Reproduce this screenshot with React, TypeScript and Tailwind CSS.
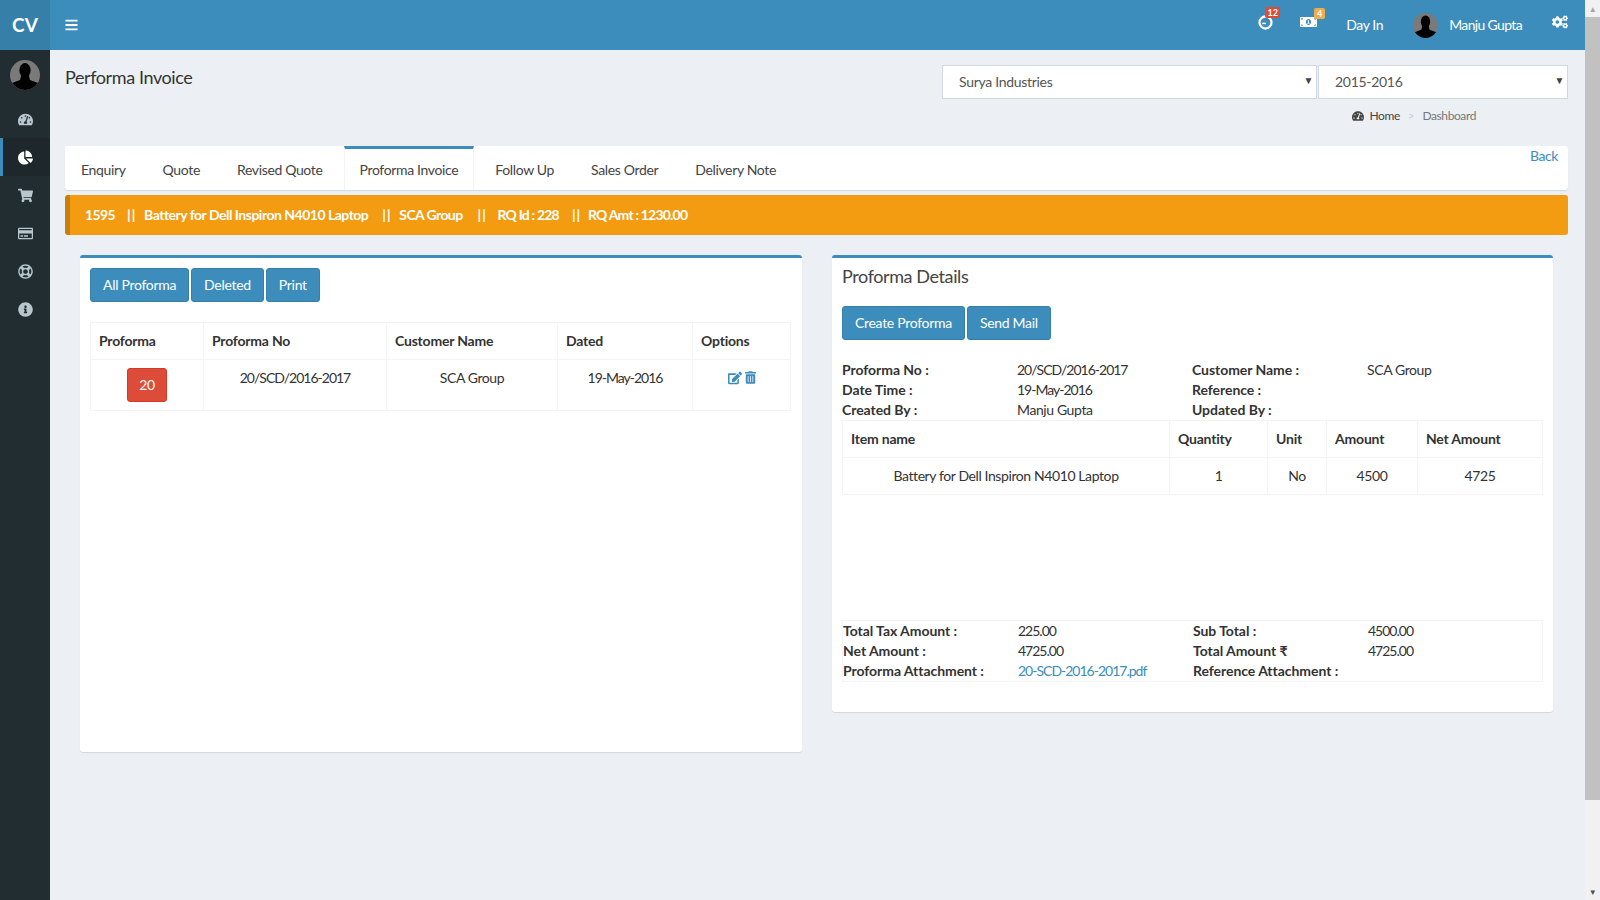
import { FaBars, FaCogs, FaChartPie, FaEdit, FaInfoCircle, FaMoneyBillAlt, FaRegCreditCard, FaRegLifeRing, FaShoppingCart, FaTachometerAlt, FaTrashAlt } from 'react-icons/fa';

const navIcons = [FaTachometerAlt, FaChartPie, FaShoppingCart, FaRegCreditCard, FaRegLifeRing, FaInfoCircle];
const tabs = ['Enquiry', 'Quote', 'Revised Quote', 'Proforma Invoice', 'Follow Up', 'Sales Order', 'Delivery Note'];
const alertBits = [
  { text: 'Battery for Dell Inspiron N4010 Laptop', sep: 'ml-[12px] mr-[11px]', cls: 'tracking-[-0.5px]' },
  { text: 'SCA Group', sep: 'ml-[14px] mr-[11px]', cls: 'tracking-[-0.6px]' },
  { text: 'RQ Id : 228', sep: 'ml-[15px] mr-[14px]', cls: 'tracking-[-0.8px]' },
  { text: 'RQ Amt : 1230.00', sep: 'ml-[13px] mr-[10px]', cls: 'tracking-[-0.8px]' },
];

function Avatar({ size }: { size: string }) {
  return (
    <svg viewBox="0 0 30 30" className={size}>
      <defs>
        <clipPath id="avatar-clip">
          <circle cx="15" cy="15" r="15" />
        </clipPath>
      </defs>
      <circle cx="15" cy="15" r="15" fill="#7a7a7a" />
      <g clipPath="url(#avatar-clip)" fill="#000">
        <ellipse cx="15" cy="10.5" rx="5.6" ry="7.5" />
        <path d="M11 16h8l1 4 8 3v7H2v-7l8-3z" />
      </g>
    </svg>
  );
}

function Btn({ children }: { children: string }) {
  return (
    <button className="h-[34px] rounded-[3px] border border-[#367fa9] bg-[#3c8dbc] px-3 text-sm tracking-[-0.3px] text-white">
      {children}
    </button>
  );
}

function Value({ text }: { text: string }) {
  return <span className={/\d/.test(text) ? 'tracking-[-1px]' : ''}>{text}</span>;
}

function Info({ rows }: { rows: string[][] }) {
  return (
    <>
      {rows.map((row) => (
        <div key={row[0]} className="grid h-5 grid-cols-[175px_175px_175px_175px] items-center text-sm leading-5">
          <b className="font-bold tracking-[-0.05px] text-[#333]">{row[0]}</b>
          <Value text={row[1]} />
          <b className="font-bold tracking-[-0.05px] text-[#333]">{row[2]}</b>
          <Value text={row[3]} />
        </div>
      ))}
    </>
  );
}

function SelectBox({ label, width }: { label: string; width: string }) {
  return (
    <div className={`relative flex h-[34px] items-center border border-[#d2d6de] bg-white pl-4 tracking-[-0.3px] text-[#555] ${width}`}>
      {label}
      <span className="absolute right-[3px] top-[7px] text-[10px] text-[#444]">▼</span>
    </div>
  );
}

export default function App() {
  return (
    <div className="flex h-[900px] w-[1600px] overflow-hidden bg-[#ecf0f5] font-[family-name:Lato,sans-serif] text-sm tracking-[-0.4px] text-[#333]">
      {/* sidebar */}
      <aside className="flex w-[50px] shrink-0 flex-col bg-[#222d32]">
        <div className="flex h-[50px] items-center justify-center bg-[#367fa9] text-[19px] font-bold tracking-normal text-white">CV</div>
        <div className="flex h-[50px] items-center justify-center">
          <Avatar size="h-[30px] w-[30px]" />
        </div>
        <nav className="flex flex-col">
          {navIcons.map((Icon, i) => (
            <div
              key={i}
              className={
                i === 1
                  ? 'flex h-[38px] items-center justify-center border-l-[3px] border-[#3c8dbc] bg-[#1e282c] pr-[3px] text-white'
                  : 'flex h-[38px] items-center justify-center text-[#b8c7ce]'
              }
            >
              <Icon className="h-[15px] w-[15px]" />
            </div>
          ))}
        </nav>
      </aside>

      <div className="flex min-w-0 flex-1 flex-col">
        {/* top bar */}
        <header className="flex h-[50px] shrink-0 items-center bg-[#3c8dbc] pl-[15px] text-white">
          <FaBars className="h-[14px] w-[13px]" />
          <div className="ml-auto flex items-center">
            <span className="relative mb-[6px]">
              <svg viewBox="0 0 16 16" className="h-[15px] w-[15px]" fill="none" stroke="currentColor">
                <circle cx="8" cy="8" r="6.4" strokeWidth="2.4" />
                <path d="M4.5 9h4" strokeWidth="1.6" />
              </svg>
              <span className="absolute -right-[7px] -top-[8px] h-[11px] w-[15px] rounded-[2px] bg-[#dd4b39] text-center text-[9px] font-bold leading-[11px] tracking-normal">12</span>
            </span>
            <span className="relative mb-[6px] ml-[27px]">
              <FaMoneyBillAlt className="h-[14px] w-[17px]" />
              <span className="absolute -right-[8px] -top-[7px] h-[11px] w-[11px] rounded-[2px] bg-[#f0ad4e] text-center text-[9px] font-bold leading-[11px] tracking-normal">4</span>
            </span>
            <span className="ml-[29px]">Day In</span>
            <span className="ml-[30px]">
              <Avatar size="h-[25px] w-[25px]" />
            </span>
            <span className="ml-[11px] tracking-[-0.65px]">Manju Gupta</span>
            <FaCogs className="mb-[6px] ml-[30px] mr-[17px] h-[16px] w-[16px]" />
          </div>
        </header>

        <main className="flex-1 pl-[15px] pr-[17px]">
          {/* page head */}
          <div className="flex h-[96px] justify-between pt-[15px]">
            <h1 className="text-lg leading-[24px] text-[#333]">Performa Invoice</h1>
            <div className="flex flex-col items-end">
              <div className="flex">
                <SelectBox label="Surya Industries" width="w-[375px]" />
                <SelectBox label="2015-2016" width="ml-[1px] w-[250px]" />
              </div>
              <div className="mr-[92px] mt-[9px] flex items-center text-xs leading-4 text-[#444]">
                <FaTachometerAlt className="mr-[5px] h-3 w-3" />
                Home
                <span className="mx-2 text-[#ccc]">&gt;</span>
                <span className="text-[#777]">Dashboard</span>
              </div>
            </div>
          </div>

          {/* tabs */}
          <div className="flex h-[44px] justify-between rounded-[3px] bg-white shadow-[0_1px_1px_rgba(0,0,0,0.1)]">
            <div className="flex tracking-[-0.35px]">
              {tabs.map((t) => (
                <div
                  key={t}
                  className={
                    t === 'Proforma Invoice'
                      ? 'mr-[5px] flex items-center border-x border-t-[3px] border-x-[#f4f4f4] border-t-[#3c8dbc] px-[15px] text-[#444]'
                      : 'mr-[5px] flex items-center border-t-[3px] border-transparent px-[16px] text-[#444]'
                  }
                >
                  {t}
                </div>
              ))}
            </div>
            <a className="mr-[10px] text-[#3c8dbc]">Back</a>
          </div>

          {/* alert */}
          <div className="mt-[5px] flex h-[40px] items-center rounded-[3px] border-l-[5px] border-[#c87f0a] bg-[#f39c12] pl-[15px] font-bold tracking-[-0.6px] text-white">
            <span>1595</span>
            {alertBits.map((bit) => (
              <span key={bit.text} className="flex">
                <span className={`w-[6px] tracking-[1px] ${bit.sep}`}>||</span>
                <span className={bit.cls}>{bit.text}</span>
              </span>
            ))}
          </div>

          <div className="mt-[20px] flex items-start justify-between px-[15px]">
            {/* proforma list */}
            <section className="h-[497px] w-[722px] rounded-[3px] border-t-[3px] border-[#3c8dbc] bg-white px-[10px] pt-[10px] shadow-[0_1px_1px_rgba(0,0,0,0.1)]">
              <div className="flex gap-[2px]">
                <Btn>All Proforma</Btn>
                <Btn>Deleted</Btn>
                <Btn>Print</Btn>
              </div>
              <table className="mt-[20px] w-[700px] table-fixed border-collapse border border-[#f4f4f4]">
                <colgroup>
                  <col className="w-[113px]" />
                  <col className="w-[183px]" />
                  <col className="w-[171px]" />
                  <col className="w-[135px]" />
                  <col className="w-[98px]" />
                </colgroup>
                <thead>
                  <tr className="h-[37px] text-left">
                    {['Proforma', 'Proforma No', 'Customer Name', 'Dated', 'Options'].map((h) => (
                      <th key={h} className="border border-[#f4f4f4] px-2 font-bold tracking-[-0.2px]">{h}</th>
                    ))}
                  </tr>
                </thead>
                <tbody>
                  <tr className="h-[51px] text-center align-top">
                    <td className="border border-[#f4f4f4] pt-[8px]">
                      <span className="inline-flex h-[34px] w-[40px] items-center justify-center rounded-[3px] border border-[#d73925] bg-[#dd4b39] text-white">20</span>
                    </td>
                    <td className="border border-[#f4f4f4] pt-2 tracking-[-1px]">20/SCD/2016-2017</td>
                    <td className="border border-[#f4f4f4] pt-2">SCA Group</td>
                    <td className="border border-[#f4f4f4] pt-2 tracking-[-1px]">19-May-2016</td>
                    <td className="border border-[#f4f4f4] pt-[11px]">
                      <div className="flex justify-center gap-[3px] text-[#3c8dbc]">
                        <FaEdit className="h-[14px] w-[14px]" />
                        <FaTrashAlt className="h-[13px] w-[11px]" />
                      </div>
                    </td>
                  </tr>
                </tbody>
              </table>
            </section>

            {/* details */}
            <section className="h-[457px] w-[721px] rounded-[3px] border-t-[3px] border-[#3c8dbc] bg-white px-[10px] pt-[6px] shadow-[0_1px_1px_rgba(0,0,0,0.1)]">
              <h2 className="text-lg leading-[24px] text-[#444]">Proforma Details</h2>
              <div className="mt-[18px] flex gap-[2px]">
                <Btn>Create Proforma</Btn>
                <Btn>Send Mail</Btn>
              </div>
              <div className="mt-[20px]">
                <Info
                  rows={[
                    ['Proforma No :', '20/SCD/2016-2017', 'Customer Name :', 'SCA Group'],
                    ['Date Time :', '19-May-2016', 'Reference :', ''],
                    ['Created By :', 'Manju Gupta', 'Updated By :', ''],
                  ]}
                />
              </div>
              <table className="w-[700px] table-fixed border-collapse border border-[#f4f4f4]">
                <colgroup>
                  <col className="w-[327px]" />
                  <col className="w-[98px]" />
                  <col className="w-[59px]" />
                  <col className="w-[91px]" />
                  <col className="w-[125px]" />
                </colgroup>
                <thead>
                  <tr className="h-[37px] text-left">
                    {['Item name', 'Quantity', 'Unit', 'Amount', 'Net Amount'].map((h) => (
                      <th key={h} className="border border-[#f4f4f4] px-2 font-bold tracking-[-0.2px]">{h}</th>
                    ))}
                  </tr>
                </thead>
                <tbody>
                  <tr className="h-[37px] text-center">
                    {['Battery for Dell Inspiron N4010 Laptop', '1', 'No', '4500', '4725'].map((c) => (
                      <td key={c} className="border border-[#f4f4f4] px-2">{c}</td>
                    ))}
                  </tr>
                </tbody>
              </table>
              <div className="mt-[125px] border border-[#f4f4f4]">
                <Info
                  rows={[
                    ['Total Tax Amount :', '225.00', 'Sub Total :', '4500.00'],
                    ['Net Amount :', '4725.00', 'Total Amount ₹', '4725.00'],
                  ]}
                />
                <div className="grid h-5 grid-cols-[175px_175px_175px_175px] items-center text-sm leading-5">
                  <b className="font-bold tracking-[-0.05px]">Proforma Attachment :</b>
                  <a className="tracking-[-1px] text-[#3c8dbc]">20-SCD-2016-2017.pdf</a>
                  <b className="font-bold tracking-[-0.05px]">Reference Attachment :</b>
                  <span />
                </div>
              </div>
            </section>
          </div>
        </main>
      </div>

      {/* window scrollbar */}
      <div className="flex w-[15px] shrink-0 flex-col bg-[#f1f1f1]">
        <div className="flex h-[17px] items-center justify-center text-[8px] leading-none text-[#a3a3a3]">▲</div>
        <div className="h-[783px] bg-[#c1c1c1]" />
        <div className="mt-auto flex h-[17px] items-center justify-center text-[8px] leading-none text-[#505050]">▼</div>
      </div>
    </div>
  );
}
